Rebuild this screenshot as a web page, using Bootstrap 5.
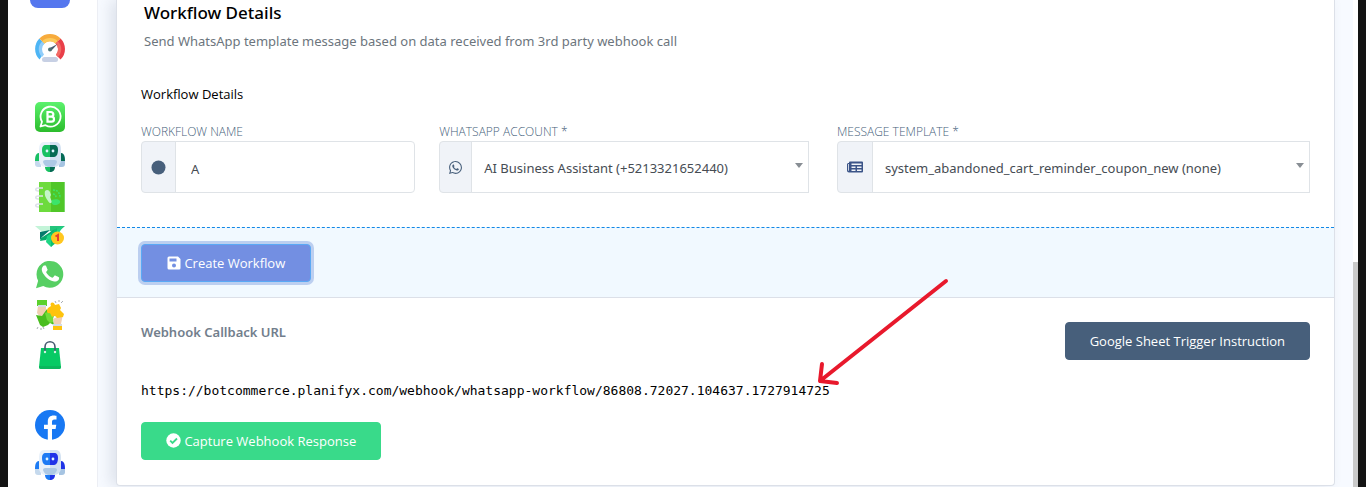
<!DOCTYPE html>
<html lang="en">
<head>
<meta charset="utf-8">
<meta name="viewport" content="width=device-width, initial-scale=1">
<title>Workflow Details</title>
<link href="https://cdn.jsdelivr.net/npm/bootstrap@5.3.0/dist/css/bootstrap.min.css" rel="stylesheet">
<style>
  body { background: #131313; font-family: "Open Sans", "Noto Sans", sans-serif; font-size: 13px; line-height: 20px; color: #000; }
  .app-frame { min-height: 100vh; margin: 0 8px; background: #f7faff; }
  .side-rail { width: 90px; background: #fff; border-right: 1px solid #eceef4; padding-right: 5px; gap: 10px; }
  .side-rail a { display: block; width: 30px; height: 30px; }
  .side-rail a.rail-short { height: 28px; }
  .side-rail a.rail-group { margin-top: 26px; }
  .side-rail svg { display: block; }
  .side-rail .brand-tile { width: 40px; height: 8px; background: #5577ee; border-radius: 0 0 8px 8px; }
  .main-pane { padding: 0 18px 2px; }
  .scroll-track { width: 5px; background: #fff; }
  .scroll-track span { display: block; margin-top: 262px; height: calc(100% - 262px); background: #c9c9c9; }
  .flow-card { border: 1px solid #dce0e8; border-top: 0; border-radius: 0 0 4px 4px; background: #fff; box-shadow: -6px 0 14px rgba(60,75,110,.13); }
  .card-pad { padding: 0 24px; }
  .flow-title { font-family: "Noto Sans", sans-serif; font-size: 17px; line-height: 24px; font-weight: 500; margin: 0; padding: 1px 3px 0; }
  .flow-lead { font-family: "Noto Sans", sans-serif; color: #6c757d; padding: 6px 3px 0; margin: 0; }
  .flow-sub { margin: 33px 0 0; }
  .field-label { display: block; font-size: 12px; line-height: 18px; font-weight: 300; color: #475f7b; margin: 19px 0 0; text-transform: uppercase; }
  .input-group-text { background: #f0f3f8; border-color: #dfe3e7; color: #475f7b; border-radius: 4px; padding: 0 9px; min-width: 33px; justify-content: center; }
  .field { font-family: "Noto Sans", sans-serif; height: 52px; font-size: 13px; border-color: #dfe3e7; color: #464c53; padding: 3px 15px 0; border-radius: 4px; }
  .field-pick { padding: 3px 30px 0 12px; background-image: none; border-radius: 0; }
  .pick-wrap::after { content: ""; position: absolute; right: 6px; top: 22px; border: 4px solid transparent; border-top: 5px solid #888e94; border-bottom: 0; z-index: 6; }
  .pick-inset { width: auto; margin-right: 4px; }
  .action-bar { margin-top: 34px; border-top: 1px dashed #1288e6; border-bottom: 1px solid #dce0e8; background: #f1f9ff; padding: 16px 24px 15px; }
  .btn { font-size: 13px; line-height: 20px; padding: 8px 24px; border-radius: 4px; }
  .btn svg { vertical-align: -2px; }
  .btn-create { background: #738fe2; border-color: #5aa9f5; color: #fff; padding: 8px 25px; box-shadow: 0 0 0 3px #bccff0; }
  .btn-sheet { background: #475f7b; color: #fff; border: 1px solid #475f7b; }
  .btn-capture { background: #39da8a; color: #fff; border: 1px solid #39da8a; margin-top: 21px; margin-bottom: 1px; }
  .hook-title { font-family: "Noto Sans", sans-serif; font-size: 13px; line-height: 20px; font-weight: 600; color: #727e8c; margin: 0; }
  .hook-url { font-family: "DejaVu Sans Mono", monospace; font-size: 13px; line-height: 20px; }
  .hook-arrow { position: absolute; right: -120px; bottom: 14px; pointer-events: none; }
</style>
</head>
<body>
<svg width="0" height="0" class="position-absolute" aria-hidden="true">
  <symbol id="robot" viewBox="0 0 30 30">
    <path d="M4 11C1 11 0 14 0 18v4c0 2 1 3 3 3h3V11z" fill="#c5d9ed"/><path d="M26 11c3 0 4 3 4 7v4c0 2-1 3-3 3h-3V11z" fill="#a6c4e2"/>
    <path d="M4 11c-3 0-4 4-4 8h4z" fill="currentColor"/><path d="M26 11c3 0 4 4 4 8h-4z" fill="var(--dk)"/>
    <path d="M10 24h5v6c-3 0-5-2-5-5z" fill="currentColor"/><path d="M15 24h5v1c0 3-2 5-5 5z" fill="var(--dk)"/>
    <path d="M15 0H9C5 0 4 4 4 8v10c0 4 3 7 7 7h4z" fill="#e8f1fa"/><path d="M15 0h6c4 0 5 4 5 8v10c0 4-3 7-7 7h-4z" fill="#d3e2f2"/>
    <path d="M15 3h-4C8 3 7 5 7 8s1 7 4 7h4z" fill="currentColor"/><path d="M15 3h4c3 0 4 2 4 5s-1 7-4 7h-4z" fill="var(--dk)"/>
    <circle cx="12" cy="9" r="1.4" fill="#dff4ff"/><circle cx="18" cy="9" r="1.4" fill="#dff4ff"/>
    <path d="M8 20c0-2 2-2 4-2h6c2 0 4 0 4 2-1 3-3 5-7 5s-6-2-7-5z" fill="#adc9e5"/>
  </symbol>
  <symbol id="wa" viewBox="0 0 24 24"><path fill-rule="evenodd" d="M17.472 14.382c-.297-.149-1.758-.867-2.03-.967-.273-.099-.471-.148-.67.15-.197.297-.767.966-.94 1.164-.173.199-.347.223-.644.075-.297-.15-1.255-.463-2.39-1.475-.883-.788-1.48-1.761-1.653-2.059-.173-.297-.018-.458.13-.606.134-.133.298-.347.446-.52.149-.174.198-.298.298-.497.099-.198.05-.371-.025-.52-.075-.149-.669-1.612-.916-2.207-.242-.579-.487-.5-.669-.51-.173-.008-.371-.01-.57-.01-.198 0-.52.074-.792.372-.272.297-1.04 1.016-1.04 2.479 0 1.462 1.065 2.875 1.213 3.074.149.198 2.096 3.2 5.077 4.487.709.306 1.262.489 1.694.625.712.227 1.36.195 1.871.118.571-.085 1.758-.719 2.006-1.413.248-.694.248-1.289.173-1.413-.074-.124-.272-.198-.57-.347M12.05 21.785a9.87 9.87 0 0 1-5.031-1.378l-.361-.214-3.741.982.998-3.648-.235-.374a9.86 9.86 0 0 1-1.51-5.26c.001-5.45 4.436-9.884 9.888-9.884a9.83 9.83 0 0 1 9.884 9.892c-.003 5.45-4.437 9.884-9.892 9.884M20.464 3.488A11.82 11.82 0 0 0 12.05 0C5.495 0 .16 5.335.157 11.892c0 2.096.547 4.142 1.588 5.945L.057 24l6.305-1.654a11.88 11.88 0 0 0 5.683 1.448h.005c6.554 0 11.89-5.335 11.893-11.893a11.82 11.82 0 0 0-3.479-8.413"/></symbol>
</svg>

<div class="app-frame d-flex">
  <nav class="side-rail d-flex flex-column align-items-center flex-shrink-0" aria-label="Main">
    <span class="brand-tile mb-3"></span>
    <a href="#" aria-label="Dashboard"><svg width="30" height="30" viewBox="0 0 30 30">
      <path d="M4.500 25.500A15 15 0 0 1 4.400 4.400L9.500 9.500A8 8 0 0 0 7.500 21z" fill="#4db5f5"/><path d="M7 23A11 11 0 0 1 7.200 7.200L9.500 9.500A8 8 0 0 0 9 20.500z" fill="#90cdfa"/>
      <path d="M4.400 4.400a15 15 0 0 1 21.200 0L20.500 9.500a8 8 0 0 0-11 0z" fill="#f7ab3c"/><path d="M7.200 7.200a11 11 0 0 1 15.600 0L20.500 9.500a8 8 0 0 0-11 0z" fill="#fccb5c"/>
      <path d="M25.600 4.400a15 15 0 0 1 0 21.200L21 21a8 8 0 0 0-.5-11.500z" fill="#e93f49"/><path d="M22.800 7.200A11 11 0 0 1 23 23l-2-2.500a8 8 0 0 0-.5-11z" fill="#f26a64"/>
      <path d="M22.500 10 16.500 16.500 14 14.500z" fill="#4a5a6e"/><circle cx="15" cy="15.500" r="2" fill="#4d7275"/>
      <rect x="7" y="23" width="16" height="5" rx="2.500" fill="#c7d0e4"/></svg></a>
    <a href="#" aria-label="WhatsApp Business" class="mt-4 pt-1"><svg width="30" height="30" viewBox="0 0 30 30">
      <defs><linearGradient id="g" x2="0" y2="1"><stop stop-color="#5bf26d"/><stop offset="1" stop-color="#2cbc2c"/></linearGradient></defs>
      <rect width="30" height="30" rx="5" fill="url(#g)"/><path d="M5.500 24.500 7 19.700A10 10 0 1 1 10.500 23.200z" fill="none" stroke="#fff" stroke-width="1.800" stroke-linejoin="round"/>
      <path d="M12.500 10h3.500a2.300 2.300 0 0 1 0 4.700h-3.500zm0 4.700h4a2.500 2.500 0 0 1 0 5h-4z" fill="none" stroke="#fff" stroke-width="2.200"/></svg></a>
    <a href="#" aria-label="Bot" class="mt-1"><svg width="30" height="30" style="color:#18c162;--dk:#056b54"><use href="#robot"/></svg></a>
    <a href="#" aria-label="Contacts"><svg width="30" height="30" viewBox="0 0 30 30">
      <path d="M4 0h12v30H4z" fill="#6ddb3d"/><path d="M16 0h14v30H16z" fill="#50c628"/><path d="M29 0h1v30h-1z" fill="#7bd66a"/>
      <path d="M8 6H3C0 6 0 9 3 9h1M8 14H3c-3 0-3 3 0 3h1M8 22H3c-3 0-3 3 0 3h1" fill="none" stroke="#dde1ea" stroke-width="1.600"/>
      <path d="M10 9c2-2 4-1 5 1l1 3-1 2 2 5c-1 2-3 1-4-1-2-3-4-6-3-10z" fill="#c4f5c9"/><path d="M17 18c3-1 7-1 8 1s-2 4-5 4-4-2-3-5z" fill="#3ce46a"/>
      <path d="M18 8c5 0 7 3 7 8M18 12c2 0 3 1 3 4" fill="none" stroke="#3ce46a" stroke-width="1.600" stroke-dasharray="2 1"/></svg></a>
    <a href="#" aria-label="Broadcast" class="rail-short"><svg width="30" height="28" viewBox="0 1 30 28">
      <path d="M0 5h17v5L7 11z" fill="#c3f4d8"/><path d="M15 5h15l-9 8-6-3z" fill="#24c47c"/><path d="m5 11 10-2-8 7-2 3z" fill="#04796b"/><path d="m6 17 14-9-9 11-6 1z" fill="#07a86a"/><path d="M28 5 16 26l-5-5 1-6z" fill="#1ed584"/><path d="m16 12 6-5v14l-6 5z" fill="#0bbf72"/>
      <circle cx="22.500" cy="17" r="6.500" fill="#ffc71f"/><path d="M20.500 15.500 23 14v6" fill="none" stroke="#e8402e" stroke-width="2"/></svg></a>
    <a href="#" aria-label="WhatsApp"><svg width="30" height="30" viewBox="0 0 24 24"><path d="M.8 22.500 2.500 16.500A10.700 10.700 0 1 1 6.600 20.700z" fill="#57cf63"/><g transform="translate(-1.500 -3) scale(1.150)"><path d="M17.472 14.382c-.297-.149-1.758-.867-2.030-.967-.273-.099-.471-.148-.670.150-.197.297-.767.966-.940 1.164-.173.199-.347.223-.644.075-.297-.150-1.255-.463-2.390-1.475-.883-.788-1.480-1.761-1.653-2.059-.173-.297-.018-.458.130-.606.134-.133.298-.347.446-.520.149-.174.198-.298.298-.497.099-.198.050-.371-.025-.520-.075-.149-.669-1.612-.916-2.207-.242-.579-.487-.500-.669-.510-.173-.008-.371-.010-.570-.010-.198 0-.520.074-.792.372-.272.297-1.040 1.016-1.040 2.479 0 1.462 1.065 2.875 1.213 3.074.149.198 2.096 3.200 5.077 4.487.709.306 1.262.489 1.694.625.712.227 1.360.195 1.871.118.571-.085 1.758-.719 2.006-1.413.248-.694.248-1.289.173-1.413-.074-.124-.272-.198-.570-.347" fill="#fff"/></g></svg></a>
    <a href="#" aria-label="Integrations"><svg width="30" height="30" viewBox="0 0 30 30">
      <path d="M2 0h10v6H2z" fill="#5bd12d"/><path d="M3 6h8v10c-4 2-7 0-9-3z" fill="#f1cfb2"/><path d="M3 5h8v2H3z" fill="#d2dbe6"/>
      <path d="m1 15 6 1 5-7 3 6 4 0-1 4 1 6-4-2-2 2-5 2-3-2z" fill="#49bd1f"/><path d="m10 13 5-2 3 3v8l-3 1-3-3z" fill="#71dc3b"/>
      <path d="M28 14l-2 10h-7l-1-5z" fill="#f1cfb2"/><path d="M13 8l3-2c-2-4 3-5 4-1l4-1 2 4-1 2 4 4-1 3-6 1c-1-2-3-3-5-1l-2-4c-3 1-4-2-2-5z" fill="#fec30d"/>
      <path d="M18 24h9v2h-9z" fill="#d2dbe6"/><path d="M18 26h9v4h-9z" fill="#fec30d"/>
      <path d="m21 3-1-2m4 1V0m2 3 2-2M3 27l-1 2m4-1v2m2-3 1 2" stroke="#a8adb3"/></svg></a>
    <a href="#" aria-label="Store"><svg width="30" height="30" viewBox="0 0 30 30">
      <path d="M6 8h18l2 19q0 2-2 2H6q-2 0-2-2z" fill="#07ca64"/><path d="M4.200 26h21.600l.2 1q0 2-2 2H6q-2 0-2-2z" fill="#0bb75d"/><path d="M10 12V7c0-7 10-7 10 0v5" fill="none" stroke="#455a70" stroke-width="1.600"/><circle cx="10" cy="12" r="1.200" fill="#d0f5e0"/><circle cx="20" cy="12" r="1.200" fill="#d0f5e0"/></svg></a>
    <a href="#" aria-label="Facebook" class="rail-group"><svg class="mt-1" width="30" height="30" viewBox="0 0 30 30"><circle cx="15" cy="15" r="15" fill="#1878f3"/><path d="M12.800 30V19H9v-4.200h3.800v-3.300c0-4 2.300-6 5.900-6 1.200 0 2.800.3 2.800.3v3.600h-2c-2 0-2.500 1.200-2.500 2.500v2.900h4.300L20.600 19H17v11z" fill="#fff"/></svg></a>
    <a href="#" aria-label="Messenger bot"><svg class="mt-1" width="30" height="30" style="color:#1d7bf4;--dk:#2033e8"><use href="#robot"/></svg></a>
  </nav>

  <main class="main-pane flex-grow-1">
    <div class="flow-card">
      <div class="card-pad">
        <h1 class="flow-title">Workflow Details</h1>
        <p class="flow-lead">Send WhatsApp template message based on data received from 3rd party webhook call</p>
        <p class="flow-sub">Workflow Details</p>
        <form class="row">
          <div class="col-3">
            <label class="field-label" for="wname">Workflow name</label>
            <div class="input-group">
              <span class="input-group-text"><svg width="15" height="15" viewBox="0 0 15 15"><circle cx="7.500" cy="7.500" r="7" fill="#475f7b"/></svg></span>
              <input id="wname" type="text" class="form-control field" value="A">
            </div>
          </div>
          <div class="col-4">
            <label class="field-label" for="wacc">WhatsApp account *</label>
            <div class="input-group pick-wrap pick-inset">
              <span class="input-group-text"><svg width="13" height="13" fill="#475f7b"><use href="#wa"/></svg></span>
              <select id="wacc" class="form-select field field-pick"><option>AI Business Assistant (+5213321652440)</option></select>
            </div>
          </div>
          <div class="col-5">
            <label class="field-label" for="wtpl">Message template *</label>
            <div class="input-group pick-wrap">
              <span class="input-group-text"><svg width="16" height="12" viewBox="0 0 16 12"><path fill-rule="evenodd" d="M3 .5h12a1 1 0 0 1 1 1v9a1 1 0 0 1-1 1H2a2 2 0 0 1-2-2V3l1-1h1V1.500a1 1 0 0 1 1-1zM1.200 3v6.500q.4.600.8 0V3zM4.500 2.500V4h10V2.500zm0 3V7h4V5.500zm5.500 0V7h4.500V5.500zm-5.500 3V10h4V8.500zm5.500 0V10h4.500V8.500z" fill="#3b5488"/></svg></span>
              <select id="wtpl" class="form-select field field-pick"><option>system_abandoned_cart_reminder_coupon_new (none)</option></select>
            </div>
          </div>
        </form>
      </div>
      <div class="action-bar">
        <button type="button" class="btn btn-create"><svg width="14" height="14" viewBox="0 0 14 14"><path fill-rule="evenodd" d="M2 .5h9L13.500 3v9a1.500 1.500 0 0 1-1.500 1.500H2A1.500 1.500 0 0 1 .5 12V2A1.500 1.500 0 0 1 2 .5zM2.500 2.500v3h7v-3zM7 7.500a2 2 0 1 0 0 4 2 2 0 0 0 0-4z" fill="#fff"/></svg> Create Workflow</button>
      </div>
      <div class="card-pad pt-4 pb-4">
        <div class="d-flex justify-content-between align-items-start">
          <h2 class="hook-title">Webhook Callback URL</h2>
          <button type="button" class="btn btn-sheet">Google Sheet Trigger Instruction</button>
        </div>
        <div class="mt-3 pt-1"><span class="hook-url d-inline-block position-relative">https://botcommerce.planifyx.com/webhook/whatsapp-workflow/86808.72027.104637.1727914725<svg class="hook-arrow" width="134" height="110" viewBox="0 0 134 110" fill="none" stroke="#e8192c" stroke-width="4" stroke-linecap="round" stroke-linejoin="round" aria-hidden="true"><path d="M130 4 4 104M6 87 4 104l17 2"/></svg></span></div>
        <button type="button" class="btn btn-capture"><svg width="15" height="15" viewBox="0 0 15 15"><circle cx="7.500" cy="7.500" r="7.200" fill="#fff"/><path d="m4.200 7.700 2.300 2.300 4.500-4.500" fill="none" stroke="#39da8a" stroke-width="1.800"/></svg> Capture Webhook Response</button>
      </div>
    </div>
  </main>
  <div class="scroll-track flex-shrink-0"><span></span></div>
</div>
<script src="https://cdn.jsdelivr.net/npm/bootstrap@5.3.0/dist/js/bootstrap.bundle.min.js"></script>
</body>
</html>
